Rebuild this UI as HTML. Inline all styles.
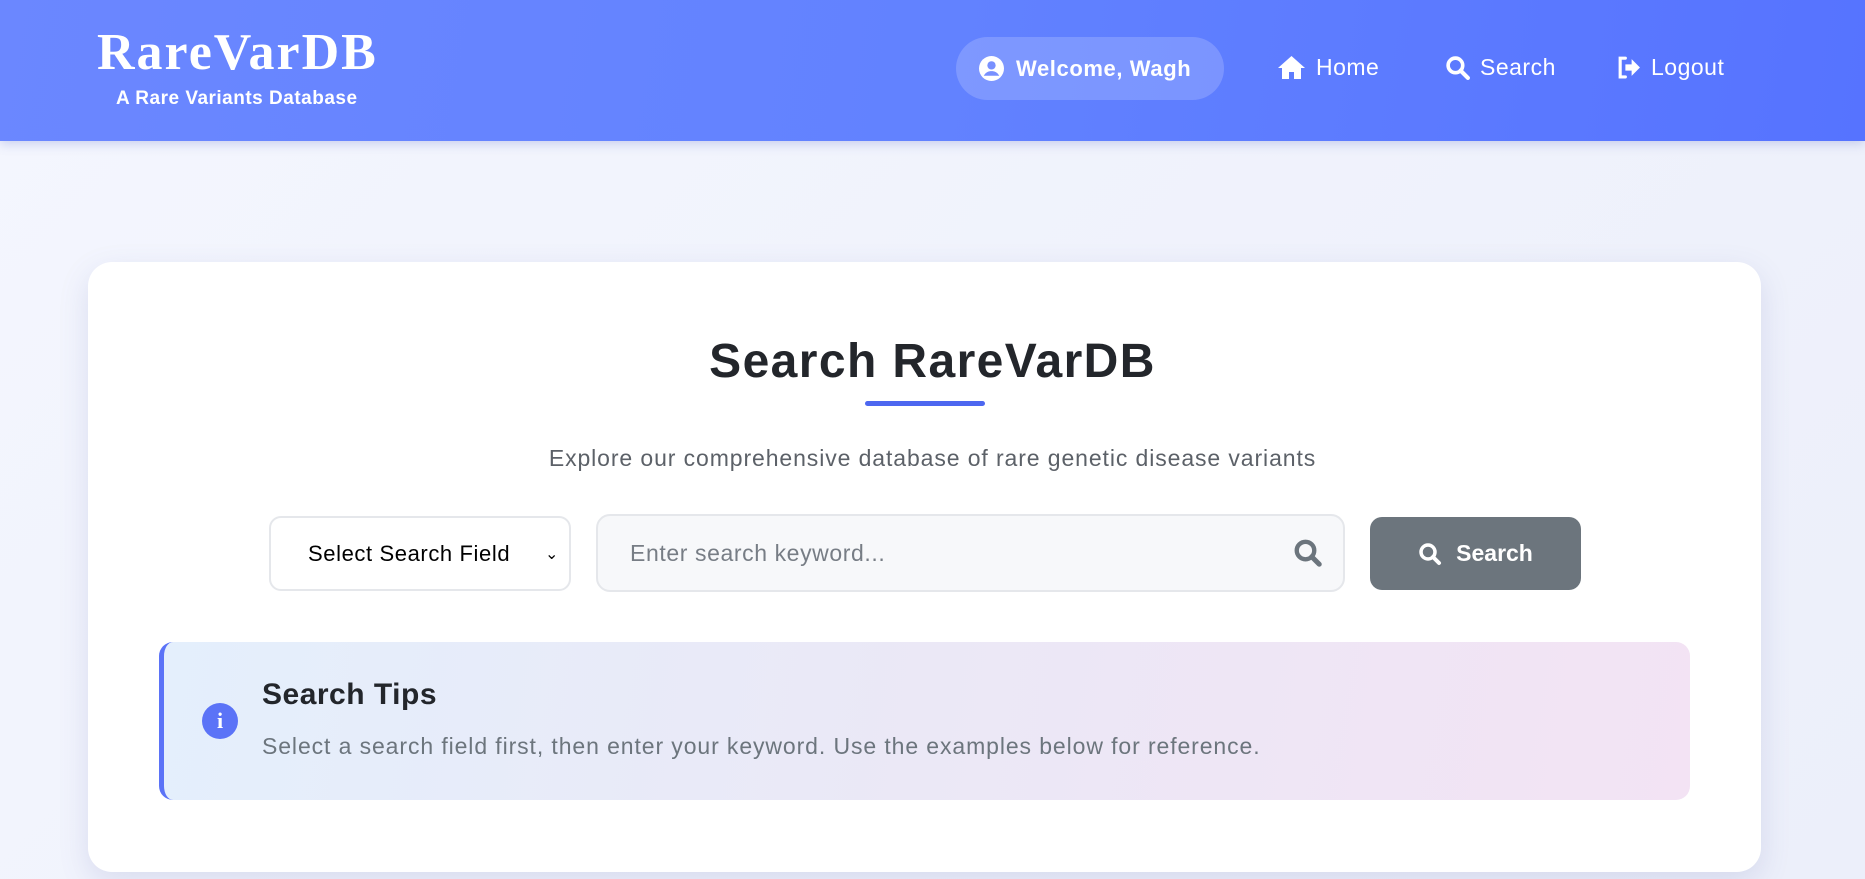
<!DOCTYPE html>
<html><head><meta charset="utf-8"><style>
*{box-sizing:border-box;margin:0;padding:0}
body{width:1865px;height:879px;overflow:hidden;font-family:"Liberation Sans","DejaVu Sans",sans-serif;background:linear-gradient(135deg,#f4f6fe,#eceffa);position:relative}
.hdr{position:absolute;left:0;top:0;width:1865px;height:141px;background:linear-gradient(100deg,#6b87ff,#6282ff 50%,#5673ff);box-shadow:0 3px 10px rgba(80,100,200,.25)}
.logo{position:absolute;left:97px;top:23px;color:#fff;font-family:"Liberation Serif",serif;font-weight:bold;font-size:52px;letter-spacing:2px}
.sub{position:absolute;left:116px;top:88px;color:#fff;font-size:19px;font-weight:bold;letter-spacing:0.5px}
.pill{position:absolute;left:956px;top:37px;width:268px;height:63px;border-radius:32px;background:rgba(255,255,255,.18);color:#fff;font-weight:bold;font-size:22px;letter-spacing:0.6px;display:flex;align-items:center;padding-left:23px;gap:12px}
.nav{position:absolute;top:54px;color:#fff;font-size:23px;letter-spacing:0.5px;display:flex;align-items:center;gap:10px}
.card{position:absolute;left:88px;top:262px;width:1673px;height:610px;background:#fff;border-radius:24px;box-shadow:0 10px 30px rgba(80,90,160,.15)}
h1{position:absolute;left:0;width:1865px;top:334px;text-align:center;font-size:48px;letter-spacing:1.4px;color:#23262b;font-weight:bold}
.ul{position:absolute;left:865px;top:401px;width:120px;height:5px;border-radius:3px;background:#4d67f0}
.ds{position:absolute;left:0;width:1865px;top:445px;text-align:center;font-size:23px;letter-spacing:0.9px;color:#5c6168}
.sel{position:absolute;left:269px;top:516px;width:302px;height:75px;border:2px solid #e5e7eb;border-radius:12px;background:#fff;font-size:22px;letter-spacing:0.6px;color:#000;display:flex;align-items:center;padding-left:37px}
.inp{position:absolute;left:596px;top:514px;width:749px;height:78px;border:2px solid #e5e7eb;border-radius:14px;background:#f7f8fa;font-size:23px;letter-spacing:0.6px;color:#777d85;display:flex;align-items:center;padding-left:32px}
.btn{position:absolute;left:1370px;top:517px;width:211px;height:73px;border-radius:12px;background:#6c757d;color:#fff;font-weight:bold;font-size:23px;display:flex;align-items:center;justify-content:center;gap:14px}
.tips{position:absolute;left:159px;top:642px;width:1531px;height:158px;border-radius:14px;border-left:5px solid #5b73f7;background:linear-gradient(100deg,#e4effc,#ebe8f6 50%,#f3e3f4)}
.tt{position:absolute;left:262px;top:678px;font-size:30px;letter-spacing:0.5px;font-weight:bold;color:#23262b}
.tx{position:absolute;left:262px;top:733px;font-size:23px;letter-spacing:0.9px;color:#6c757d}
.ic{position:absolute;left:202px;top:703px;width:36px;height:36px;border-radius:50%;background:#5b73f7;color:#fff;font-weight:bold;font-family:"Liberation Serif",serif;font-size:22px;text-align:center;line-height:36px}
</style></head><body>
<div class="hdr">
<div class="logo">RareVarDB</div>
<div class="sub">A Rare Variants Database</div>
<div class="pill"><svg width="25" height="25" viewBox="0 0 24 24"><circle cx="12" cy="12" r="12" fill="#fff"/><circle cx="12" cy="9" r="4" fill="#7890ff"/><path d="M4.5 19c2-3.5 4.5-4.5 7.5-4.5s5.5 1 7.5 4.5" fill="#7890ff"/></svg>Welcome, Wagh</div>
<div class="nav" style="left:1277px"><svg width="29" height="25" viewBox="0 0 29 25"><path d="M14.5 1L1 13h4v11h7v-7h5v7h7V13h4z" fill="#fff"/></svg>Home</div>
<div class="nav" style="left:1445px"><svg width="25" height="25" viewBox="0 0 24 24"><circle cx="10" cy="10" r="7" stroke="#fff" stroke-width="3.5" fill="none"/><path d="M15 15l7 7" stroke="#fff" stroke-width="4" stroke-linecap="round"/></svg>Search</div>
<div class="nav" style="left:1616px"><svg width="25" height="25" viewBox="0 0 24 24"><path d="M9 3H4v18h5" stroke="#fff" stroke-width="3" fill="none" stroke-linecap="round"/><path d="M9 9h6V4l8 8-8 8v-5H9z" fill="#fff"/></svg>Logout</div>
</div>
<div class="card"></div>
<h1>Search RareVarDB</h1>
<div class="ul"></div>
<div class="ds">Explore our comprehensive database of rare genetic disease variants</div>
<div class="sel">Select Search Field<span style="position:absolute;right:10px;font-size:16px">&#8964;</span></div>
<div class="inp">Enter search keyword...<svg style="position:absolute;right:20px" width="30" height="30" viewBox="0 0 24 24"><circle cx="10" cy="10" r="7" stroke="#6c757d" stroke-width="3.5" fill="none"/><path d="M15 15l6 6" stroke="#6c757d" stroke-width="4" stroke-linecap="round"/></svg></div>
<div class="btn"><svg width="24" height="24" viewBox="0 0 24 24"><circle cx="10" cy="10" r="7" stroke="#fff" stroke-width="3.5" fill="none"/><path d="M15 15l6 6" stroke="#fff" stroke-width="4" stroke-linecap="round"/></svg>Search</div>
<div class="tips"></div>
<div class="ic">i</div>
<div class="tt">Search Tips</div>
<div class="tx">Select a search field first, then enter your keyword. Use the examples below for reference.</div>
</body></html>
